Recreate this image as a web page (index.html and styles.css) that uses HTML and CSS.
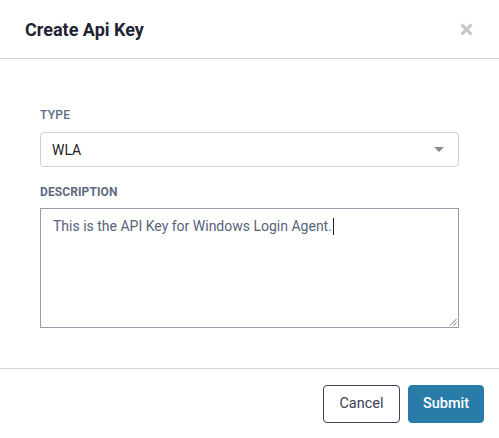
FILE: index.html
```html
<!DOCTYPE html>
<html>
<head>
<meta charset="utf-8">
<link rel="stylesheet" href="styles.css">
</head>
<body>
<div class="modal">
  <div class="modal-header">
    <h1 class="modal-title">Create Api Key</h1>
    <span class="close" aria-label="Close">
      <svg width="13" height="13" viewBox="0 0 13 13"><path d="M1.5 1.5 L11.5 11.5 M11.5 1.5 L1.5 11.5" stroke="#c6c6c6" stroke-width="3" stroke-linecap="butt"/></svg>
    </span>
  </div>
  <div class="modal-body">
    <div class="field">
      <label class="field-label">Type</label>
      <div class="select">
        <span class="select-value">WLA</span>
        <span class="select-arrow"></span>
      </div>
    </div>
    <div class="field field-desc">
      <label class="field-label field-label-bold">Description</label>
      <div class="textarea">
        <span class="textarea-text">This is the API Key for Windows Login Agent.</span><span class="caret"></span>
        <svg class="grip" width="8" height="8" viewBox="0 0 8 8"><path d="M7.5 1 L1 7.5 M7.5 4.5 L4.5 7.5" stroke="#777" stroke-width="1"/></svg>
      </div>
    </div>
  </div>
  <div class="modal-footer">
    <button class="btn btn-cancel">Cancel</button>
    <button class="btn btn-submit">Submit</button>
  </div>
</div>
</body>
</html>
```
FILE: styles.css
```css
* { box-sizing: border-box; }
html, body { margin: 0; padding: 0; background: #fff; }
body { font-family: Roboto, "Liberation Sans", Arial, sans-serif; }

.modal { width: 499px; height: 438px; display: flex; flex-direction: column; }

.modal-header {
  height: 59px;
  border-bottom: 1px solid #cfd5e0;
  display: flex;
  align-items: center;
  justify-content: space-between;
  padding: 0 26px 0 25px;
}
.modal-title {
  margin: 0;
  font-size: 18px;
  font-weight: 700;
  color: #1f2333;
}
.close { display: flex; width: 13px; height: 13px; }

.modal-body { padding: 48px 40px 0 40px; height: 310px; border-bottom: 1px solid #cfd5e0; }
.field { display: flex; flex-direction: column; }
.field-label {
  font-size: 12px;
  line-height: 16px;
  text-transform: uppercase;
  color: #5b6b86;
  font-weight: 500;
  letter-spacing: 0.3px;
}
.field-label-bold { font-weight: 700; color: #5e6a80; letter-spacing: 0.1px; }

.select {
  margin-top: 9px;
  height: 35px;
  border: 1px solid #cfcfcf;
  border-radius: 4px;
  display: flex;
  align-items: center;
  justify-content: space-between;
  padding: 0 14px 0 11px;
}
.select-value { font-size: 14px; color: #222; }
.select-arrow {
  width: 0; height: 0;
  border-left: 5px solid transparent;
  border-right: 5px solid transparent;
  border-top: 5px solid #8a8a8a;
}

.field-desc { margin-top: 17px; }
.textarea {
  position: relative;
  margin-top: 8px;
  height: 120px;
  border: 1px solid #939eb0;
  padding: 8px 12px;
  font-size: 14px;
  line-height: 18px;
  color: #56637a;
}
.caret { display: inline-block; width: 1px; height: 17px; background: #222; vertical-align: -4px; margin-left: 1px; }
.grip { position: absolute; right: 1px; bottom: 1px; }

.modal-footer {
  display: flex;
  justify-content: flex-end;
  gap: 8px;
  padding: 16px 15px 0 0;
}
.btn {
  height: 38px;
  border-radius: 4px;
  font-family: inherit;
  font-size: 14.5px;
  line-height: 16px;
  padding-bottom: 2px;
  cursor: pointer;
}
.btn-cancel { width: 77px; background: #fff; border: 1px solid #3a4258; color: #3a4258; }
.btn-submit { width: 76px; background: #2a7ca8; border: 1px solid #2a7ca8; color: #fff; font-weight: 500; }
```
